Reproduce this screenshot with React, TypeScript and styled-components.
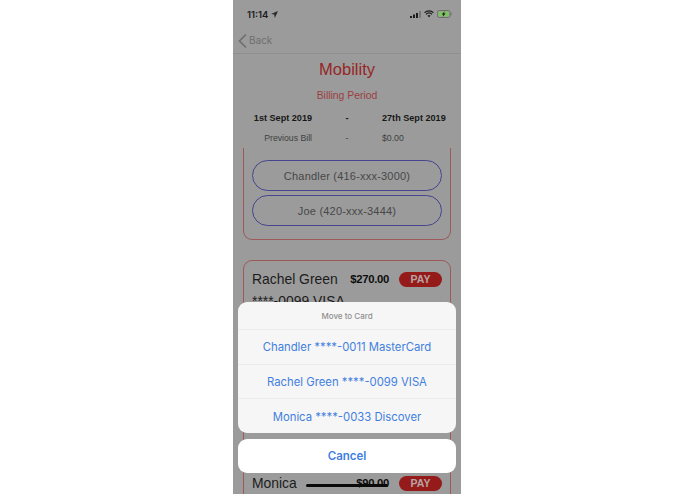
import styled, { createGlobalStyle } from "styled-components";

const GlobalStyle = createGlobalStyle`
  html, body {
    margin: 0;
    padding: 0;
    background: #ffffff;
    font-family: "Liberation Sans", Arial, sans-serif;
  }
`;

const Page = styled.div`
  width: 695px;
  height: 494px;
  display: flex;
  justify-content: center;
  overflow: hidden;
`;

const Phone = styled.div`
  position: relative;
  width: 228px;
  height: 494px;
  margin-right: 1px;
  display: flex;
  flex-direction: column;
  overflow: hidden;
  background: #9b9b9b;

  > * {
    flex-shrink: 0;
  }
`;

const StatusBar = styled.div`
  height: 28px;
  display: flex;
  align-items: center;
  justify-content: space-between;
  padding: 0 9px 0 14px;
  font-family: Inter, sans-serif;
  font-size: 9.5px;
  font-weight: 600;
  color: #1c1c1c;
`;

const StatusGroup = styled.div`
  display: flex;
  align-items: center;
  gap: 3px;
`;

const NavBar = styled.div`
  height: 25px;
  box-sizing: content-box;
  display: flex;
  align-items: center;
  gap: 2px;
  padding: 0 5px;
  border-bottom: 1px solid #8f8f8f;
  font-family: Inter, sans-serif;
  font-size: 10px;
  color: #6f6f6f;
`;

const BackLabel = styled.span`
  margin-top: -1px;
`;

const Title = styled.div`
  margin-top: 5px;
  height: 20px;
  line-height: 20px;
  text-align: center;
  font-size: 16.5px;
  color: #962626;
`;

const Subtitle = styled.div`
  margin-top: 10px;
  height: 14px;
  line-height: 14px;
  text-align: center;
  font-size: 10.4px;
  color: #9a3f3f;
`;

const InfoRow = styled.div<{ $bold?: boolean }>`
  display: grid;
  grid-template-columns: 79px 70px 1fr;
  height: 14px;
  line-height: 14px;
  margin-top: ${(p) => (p.$bold ? "8px" : "6px")};
  font-size: ${(p) => (p.$bold ? "9.1px" : "8.7px")};
  font-weight: ${(p) => (p.$bold ? 700 : 400)};
  color: ${(p) => (p.$bold ? "#171717" : "#3f3f3f")};
`;

const InfoLabel = styled.span`
  text-align: right;
`;

const InfoDash = styled.span`
  text-align: center;
`;

const InfoValue = styled.span`
  white-space: nowrap;
`;

const ContactCard = styled.div`
  margin: 3px 10px 0;
  height: 92px;
  box-sizing: border-box;
  padding: 12px 8px 0;
  display: flex;
  flex-direction: column;
  gap: 4px;
  border: 1px solid #9c5a5a;
  border-top: none;
  border-radius: 0 0 9px 9px;
`;

const ContactPill = styled.div`
  height: 31px;
  box-sizing: border-box;
  display: flex;
  align-items: center;
  justify-content: center;
  border: 1px solid #45458f;
  border-radius: 16px;
  font-size: 11px;
  letter-spacing: 0.2px;
  color: #474747;
`;

const BillCard = styled.div`
  margin: 20px 10px 0;
  padding: 9px 8px 0;
  height: 300px;
  box-sizing: border-box;
  border: 1px solid #9c5a5a;
  border-radius: 9px;
`;

const BillRow = styled.div`
  display: flex;
  align-items: center;
  height: 18px;
`;

const BillName = styled.span`
  flex: 1;
  font-size: 13.9px;
  color: #1c1c1c;
`;

const BillAmount = styled.span`
  margin-right: 10px;
  font-size: 11.3px;
  font-weight: 700;
  color: #0e0e0e;
  letter-spacing: -0.3px;
`;

const PayButton = styled.span`
  width: 43px;
  height: 15px;
  display: flex;
  align-items: center;
  justify-content: center;
  border-radius: 8px;
  background: #951b1b;
  font-size: 10.5px;
  font-weight: 700;
  color: #b9a3a3;
`;

const CardNumber = styled.div`
  margin-top: 5px;
  height: 16px;
  line-height: 16px;
  font-size: 13.9px;
  color: #1c1c1c;
`;

const MonicaRow = styled(BillRow)`
  margin-top: 165px;
`;

const Sheet = styled.div`
  position: absolute;
  left: 5px;
  right: 5px;
  top: 302px;
  display: flex;
  flex-direction: column;
  gap: 6px;
  font-family: Inter, sans-serif;
`;

const SheetGroup = styled.div`
  height: 131px;
  display: flex;
  flex-direction: column;
  border-radius: 9px;
  overflow: hidden;
  background: #f7f6f6;
`;

const SheetTitle = styled.div`
  height: 27px;
  display: flex;
  align-items: center;
  justify-content: center;
  font-size: 8px;
  font-weight: 500;
  color: #8f8f8f;
`;

const SheetOption = styled.div`
  flex: 1;
  display: flex;
  align-items: center;
  justify-content: center;
  padding-top: 1px;
  border-top: 1px solid #ebebeb;
  font-size: 11.3px;
  color: #3f7fe0;
`;

const CancelButton = styled.div`
  height: 34px;
  display: flex;
  align-items: center;
  justify-content: center;
  border-radius: 9px;
  background: #ffffff;
  font-size: 11.5px;
  font-weight: 600;
  color: #3f7fe0;
`;

const HomeIndicator = styled.div`
  position: absolute;
  left: 73px;
  bottom: 7px;
  width: 82px;
  height: 3px;
  border-radius: 2px;
  background: #0a0a0a;
`;

const App = () => {
  return (
    <Page>
      <GlobalStyle />
      <Phone>
        <StatusBar>
          <StatusGroup>
            11:14
            <svg width="7" height="7" viewBox="0 0 7 7">
              <path d="M7 0 L0 3 L3.2 3.6 L3.8 7 Z" fill="#2a2a2a" />
            </svg>
          </StatusGroup>
          <StatusGroup>
            <svg width="11" height="7" viewBox="0 0 11 7">
              <rect x="0" y="5" width="2" height="2" fill="#1c1c1c" />
              <rect x="3" y="3.5" width="2" height="3.5" fill="#1c1c1c" />
              <rect x="6" y="2" width="2" height="5" fill="#1c1c1c" />
              <rect x="9" y="0" width="2" height="7" fill="#777777" />
            </svg>
            <svg width="10" height="8" viewBox="0 0 10 8">
              <path
                d="M0.5 2.6 C3 0.2 7 0.2 9.5 2.6 M2 4.2 C3.7 2.6 6.3 2.6 8 4.2"
                stroke="#1c1c1c"
                strokeWidth="1.2"
                fill="none"
              />
              <path d="M3.5 5.5 C4.4 4.7 5.6 4.7 6.5 5.5 L5 7.5 Z" fill="#1c1c1c" />
            </svg>
            <svg width="15" height="8" viewBox="0 0 15 8">
              <rect x="0.5" y="0.5" width="12.5" height="7" rx="1.8" fill="none" stroke="#6f6f6f" />
              <rect x="1.5" y="1.5" width="10.5" height="5" rx="1" fill="#7fc263" />
              <rect x="13.6" y="2.7" width="1" height="2.6" fill="#6f6f6f" />
              <path d="M7.6 1.2 L4.8 4.4 H6.4 L5.8 6.8 L8.6 3.6 H7 Z" fill="#111111" />
            </svg>
          </StatusGroup>
        </StatusBar>
        <NavBar>
          <svg width="9" height="14" viewBox="0 0 9 14">
            <path
              d="M7.5 1 L1.5 7 L7.5 13"
              stroke="#6f6f6f"
              strokeWidth="1.7"
              fill="none"
              strokeLinecap="round"
            />
          </svg>
          <BackLabel>Back</BackLabel>
        </NavBar>
        <Title>Mobility</Title>
        <Subtitle>Billing Period</Subtitle>
        <InfoRow $bold>
          <InfoLabel>1st Sept 2019</InfoLabel>
          <InfoDash>-</InfoDash>
          <InfoValue>27th Sept 2019</InfoValue>
        </InfoRow>
        <InfoRow>
          <InfoLabel>Previous Bill</InfoLabel>
          <InfoDash>-</InfoDash>
          <InfoValue>$0.00</InfoValue>
        </InfoRow>
        <ContactCard>
          <ContactPill>Chandler (416-xxx-3000)</ContactPill>
          <ContactPill>Joe (420-xxx-3444)</ContactPill>
        </ContactCard>
        <BillCard>
          <BillRow>
            <BillName>Rachel Green</BillName>
            <BillAmount>$270.00</BillAmount>
            <PayButton>PAY</PayButton>
          </BillRow>
          <CardNumber>****-0099 VISA</CardNumber>
          <MonicaRow>
            <BillName>Monica</BillName>
            <BillAmount>$90.00</BillAmount>
            <PayButton>PAY</PayButton>
          </MonicaRow>
        </BillCard>
        <Sheet>
          <SheetGroup>
            <SheetTitle>Move to Card</SheetTitle>
            <SheetOption>Chandler ****-0011 MasterCard</SheetOption>
            <SheetOption>Rachel Green ****-0099 VISA</SheetOption>
            <SheetOption>Monica ****-0033 Discover</SheetOption>
          </SheetGroup>
          <CancelButton>Cancel</CancelButton>
        </Sheet>
        <HomeIndicator />
      </Phone>
    </Page>
  );
};

export default App;
